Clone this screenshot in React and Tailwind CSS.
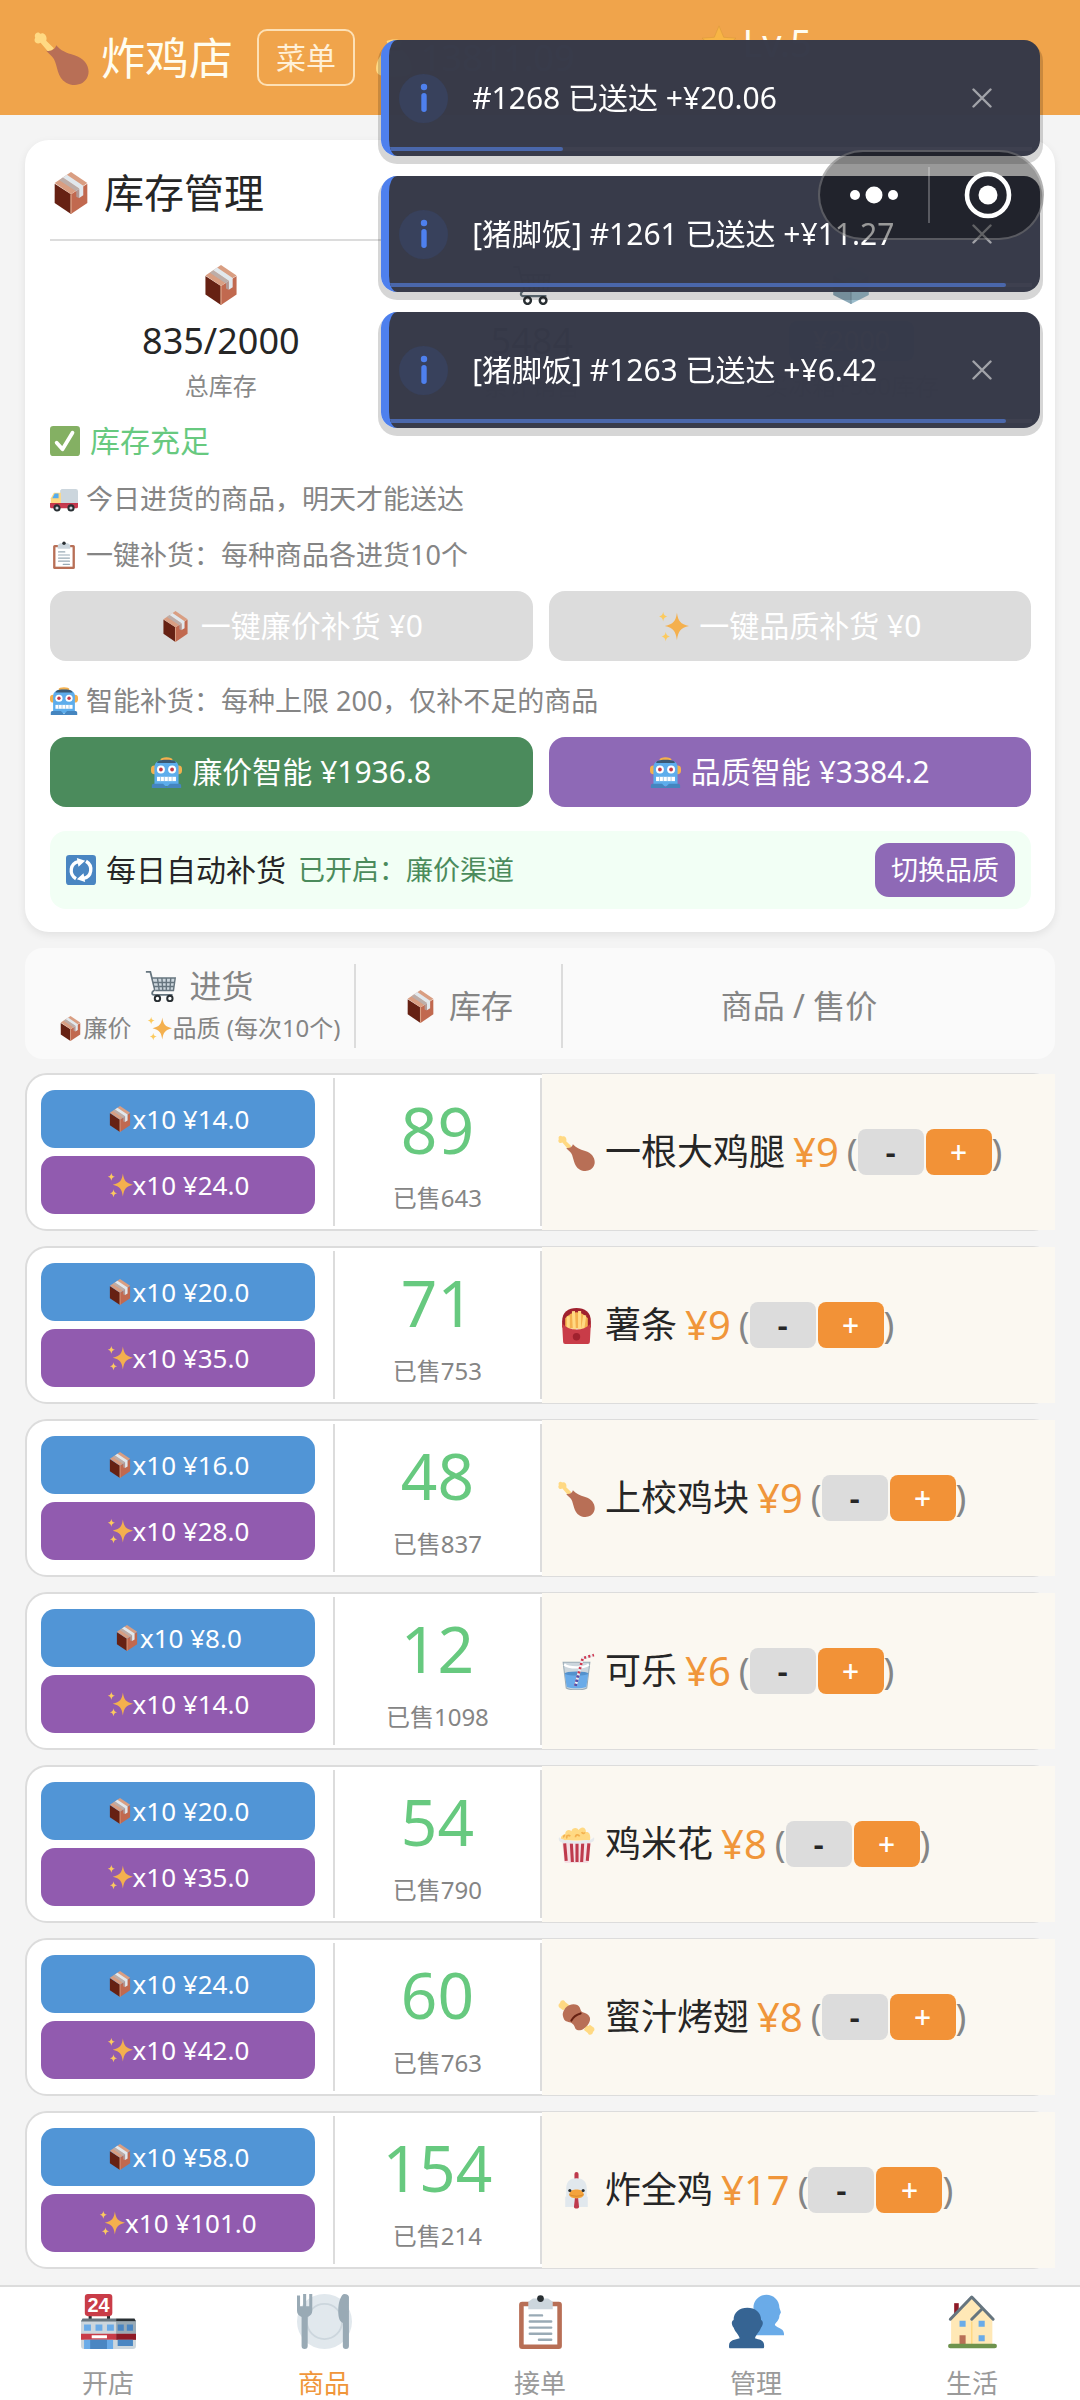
import { useState } from 'react';

// Small colour icons, all on a 36x36 grid
const drawings = {
  drumstick: (
    <>
      <path fill="#ffd983" d="M13 12 8 7c1-3-1.500-6-4-4.500C3 .5-.5 2 .8 5-.8 7.500 2 9.800 4.300 8.300L10 15z" />
      <path fill="#b86f56" d="M8 13.500c3 .8 6-1 6.500-3.500 3 3.500 6.500 5 12 6.500 7 2 10.500 8 8.800 13.500-2 6-9 7.500-14.300 4.500-6-3.500-5.500-11-8-15.500-1.200-2.300-3.500-3.500-5-5.500z" />
    </>
  ),
  box: (
    <>
      <path fill="#662113" d="M4 10v16.500L18 36V19z" />
      <path fill="#c1694f" d="M18 36V19l14-9v16.500z" />
      <path fill="#d99e82" d="M18 0 4 9.500 18 19l14-9.500z" />
      <path fill="#e1e8ed" d="m11 4.700 14 9.500v8l3.500-2.200v-8.200L14.500 2.300z" />
      <path fill="#aab8c2" d="m8 7 14.500 9.600v4.600l2.500 1.200v-8.200L11 4.700z" opacity=".6" />
      <path fill="#d99e82" d="M17.400 19h1.200v16.600l-.6.400-.6-.4z" />
    </>
  ),
  cart: (
    <>
      <path fill="none" stroke="#66757f" strokeWidth="2" d="M1 2h5l5 20c.3 1-3 1.500-3 4 0 1 1 2 2 2h21" />
      <path fill="#ccd6dd" d="M9 9h25l-2 14H12z" />
      <path fill="none" stroke="#66757f" strokeWidth="1.600" d="M8 9h26l-2 14H11.500M9 14h24M10 18.500h22.500M14 9l2 14M19 9l1 14M24 9v14M29 9l-1 14" />
      <circle cx="14" cy="32" r="3" fill="#fff" stroke="#292f33" strokeWidth="2.200" />
      <circle cx="28" cy="32" r="3" fill="#fff" stroke="#292f33" strokeWidth="2.200" />
    </>
  ),
  ice: (
    <>
      <path fill="#bdddf4" d="M18 1 2 9l16 9 16-9z" />
      <path fill="#8ca9b8" d="M2 9v18l16 8V18z" />
      <path fill="#9bbdcc" d="M34 9v18l-16 8V18z" />
      <path fill="#7996a5" d="M17.500 18h1v17h-1z" />
    </>
  ),
  check: (
    <>
      <rect width="36" height="36" rx="4" fill="#84b063" />
      <path fill="none" stroke="#fff" strokeWidth="4.500" strokeLinecap="round" strokeLinejoin="round" d="m8 20 7 8L27 8" />
    </>
  ),
  truck: (
    <>
      <path fill="#ccd6dd" d="M15 5h18a3 3 0 0 1 3 3v17H13V7z" />
      <path fill="#ffd983" d="M5 10h9v14H1v-7z" />
      <path fill="#55acee" d="M6 11h5v6H3z" />
      <path fill="#be1931" d="M0 23h36v5a2 2 0 0 1-2 2H2a2 2 0 0 1-2-2z" opacity=".85" />
      <circle cx="9" cy="29.500" r="3.300" fill="#ccd6dd" stroke="#292f33" strokeWidth="2.600" />
      <circle cx="27" cy="29.500" r="3.300" fill="#ccd6dd" stroke="#292f33" strokeWidth="2.600" />
    </>
  ),
  clipboard: (
    <>
      <rect x="4" y="5" width="28" height="31" rx="2" fill="#b86f56" />
      <path fill="#fff" d="M7 8h22v25H7z" />
      <path fill="#ccd6dd" d="M13 3h10l3 2v5H10V5z" />
      <circle cx="18" cy="3" r="2.200" fill="#292f33" />
      <path stroke="#99aab5" strokeWidth="1.600" strokeLinecap="round" d="M11 14h8M11 18h14M11 22h14M11 26h14M17 30h8" />
    </>
  ),
  sparkles: (
    <>
      <path fill="#f4b04e" d="M22 2c1.500 10 4 13 14 15.500-10 2.500-12.500 6-14 16.500-1.500-10.500-4-14-14-16.500C18 15 20.500 12 22 2z" />
      <path fill="#fcca5e" d="M6 1c.8 4 1.500 4.500 5 5.500-3.500 1-4.200 2-5 5.500-.8-3.500-1.500-4.500-5-5.500C4.500 5.500 5.200 5 6 1zM9 24c.8 4 1.500 4.500 5 5.500-3.500 1-4.200 2-5 5.500-.8-3.500-1.500-4.500-5-5.500 3.500-1 4.200-1.500 5-5.500z" />
    </>
  ),
  robot: (
    <>
      <ellipse cx="18" cy="3" rx="7" ry="2.800" fill="#f4b04e" />
      <rect x="0" y="10" width="36" height="10" rx="4" fill="#f4b04e" />
      <path fill="#5dadec" d="M4 12C4 6 8 3.500 18 3.500S32 6 32 12v22H4z" />
      <path fill="#3a5a75" d="M8 5c3-2.500 17-2.500 20 0l1 2H7z" />
      <circle cx="11.500" cy="14.500" r="4.600" fill="#fff" />
      <circle cx="24.500" cy="14.500" r="4.600" fill="#fff" />
      <circle cx="11.500" cy="14.500" r="2.200" fill="#c33a4a" />
      <circle cx="24.500" cy="14.500" r="2.200" fill="#c33a4a" />
      <path fill="#fff" d="M7 23h22v5H7z" />
      <path stroke="#9cc4e4" strokeWidth="1" d="M11 23v5M15.500 23v5M20 23v5M24.500 23v5" />
      <path fill="#4585bf" d="M1 33c0-2 2-2 3-2h10l4 4 4-4h10c1 0 3 0 3 2v3H1z" />
    </>
  ),
  refresh: (
    <>
      <rect width="36" height="36" rx="4" fill="#4a86c2" />
      <path fill="none" stroke="#fff" strokeWidth="4" d="M12 28.500C3 23 5 10 15 8M24 7.500C33 13 31 26 21 28" />
      <path fill="#fff" d="M13 3.500 23 7l-8 7zM23 32.500 13 29l8-7z" />
    </>
  ),
  fries: (
    <>
      <path fill="#a0212e" d="M4 14C4 5 10 1 18 1s14 4 14 13v6H4z" />
      <path fill="#f4b04e" d="M7 11c7-8 15-8 22 0v10H7z" />
      <path stroke="#ffd983" strokeWidth="3" d="M10 9v14M15 4l1 20M21 4v18M26 8l-2 14" />
      <path fill="#c93c48" d="M4 16c8 8 20 8 28 0l-1 18a2 2 0 0 1-2 2H7a2 2 0 0 1-2-2z" />
      <circle cx="18" cy="29" r="3.600" fill="#a0212e" />
    </>
  ),
  cola: (
    <>
      <path fill="#ccd6dd" stroke="#99aab5" strokeWidth="1" d="M5 9h26l-3 25c-4 2.500-16 2.500-20 0z" />
      <path fill="#6aabe8" d="M6.500 20h23L27.500 33c-4 1.800-15 1.800-19 0z" />
      <ellipse cx="18" cy="20" rx="11.500" ry="2" fill="#5391cc" />
      <path fill="none" stroke="#fff" strokeWidth="2.400" d="M6 11c4 4 20 4 24 0" />
      <path fill="none" stroke="#e8edf1" strokeWidth="2.600" d="M17 32 24 5l11-3" />
      <path fill="none" stroke="#d0374d" strokeWidth="2.600" strokeDasharray="2 2.200" d="M17 32 24 5l11-3" />
      <path fill="none" stroke="#4b52b0" strokeWidth="2.600" strokeDasharray="2 2.200" d="m17 32 3-12" />
    </>
  ),
  popcorn: (
    <>
      <path fill="#ffd983" d="M3 14c-1-4 2-6 4-6 0-4 4-5 6-3 1-4 6-4 7-1 3-5 8-2 7 2 4-1 5 4 4 8z" />
      <path fill="none" stroke="#f4b04e" strokeWidth="1.600" d="M9 12c-2-2 1-4 3-2M17 11c0-3 3-3 4-1M23 6c1 2 3 1 3 0M6 11c-1-1 0-2 1-2" />
      <path fill="#f5dfe4" d="M4 15h28l-2 19c0 1-1 2-2 2H8c-1 0-2-1-2-2z" />
      <path stroke="#be3a4c" strokeWidth="3" d="m6.500 17 1.500 17M13 17l1 18M18.500 17v18M24 17l-1 18M30 17l-1.500 17" />
      <path fill="#e6eaed" d="M1 11c2 2 4 1.500 6 3 4-1 7 1 11 1s8-2 12-1c2-1 3-1 5-3 1 3-1 5-3 5-9 1.500-19 1.500-28 0-2 0-4-2-3-5z" />
    </>
  ),
  wing: (
    <>
      <path stroke="#ffd983" strokeWidth="4" d="M4 4 32 32" />
      <path fill="#ffd983" d="M1 8a3 3 0 0 1 1-4c0-3 4-4 5-1l4 3-6 5zM35 28a3 3 0 0 1-1 4c0 3-4 4-5 1l-4-3 6-5z" />
      <path fill="#b86f56" d="M5 13c1-4 5-8 10-8 3 0 5 1 6 3s1 4 3 5c3 1 6 2 7 5 1 4-2 8-6 11-3 2-6 2-8 0-1-2-1-4-3-5-2-2-6-1-8-4-1-2-2-5-1-7z" />
      <path fill="none" stroke="#662113" strokeWidth="2" strokeLinecap="round" d="M13 21c2-4 5-6 9-7" />
    </>
  ),
  chicken: (
    <>
      <path fill="#be3a4c" d="M16 2a2 2 0 0 1 4 0v8h-4z" />
      <path fill="#e1e8ed" d="M8 16C8 9 12 6 18 6s10 3 10 10v18l-3-2-3 2-4-2-4 2-3-2-3 2z" />
      <path fill="#e1e8ed" d="M7 24h22v10H7z" />
      <path fill="#be3a4c" d="M16.500 25h3l1 9c-.5 2-4.500 2-5 0z" />
      <path fill="#f4a33c" d="M11 22c0-4 4-5 7-5s7 1 7 5c0 5-14 5-14 0z" />
      <path fill="none" stroke="#d98a2b" strokeWidth="1" d="M11 22c4 2 10 2 14 0" />
      <circle cx="11.500" cy="18" r="1.500" fill="#292f33" />
      <circle cx="24.500" cy="18" r="1.500" fill="#292f33" />
    </>
  ),
  store: (
    <>
      <path stroke="#292f33" strokeWidth="2" d="M6 12v5M18 12v5" />
      <rect x="2.500" y="0" width="18" height="14.500" rx="2" fill="#c93c48" />
      <text x="11.500" y="12" textAnchor="middle" fontSize="13" fontWeight="700" fill="#fff" fontFamily="Liberation Sans, sans-serif">24</text>
      <path fill="#ccd6dd" d="M0 17h36v17a2 2 0 0 1-2 2H2a2 2 0 0 1-2-2z" />
      <path fill="#66757f" d="M1 16h22v2H0z" />
      <path fill="#292f33" d="M23 16h12l1 2H23z" />
      <path fill="#99aab5" d="M23 18h13v8H23z" />
      <path fill="#6aabe8" d="M2 20h4.500v4H2zM9.500 20H14v4H9.500zM17 20h4.500v4H17z" />
      <path fill="#4a86c2" d="M24 20h4v4h-4zM30 20h4v4h-4z" />
      <path fill="#c93c48" d="M0 26h23v4H0z" />
      <path fill="#8f1a26" d="M23 26h13v4H23z" />
      <path fill="#fff" d="M7 27h10v2H7z" />
      <path fill="#6aabe8" d="M2 30h19v6H2z" />
      <path fill="#4a86c2" d="M6 30h11v6H6zM24 30h10v4H24z" />
    </>
  ),
  plate: (
    <>
      <circle cx="18" cy="18" r="18" fill="#e1e8ed" />
      <circle cx="18" cy="18" r="11.500" fill="#e1e8ed" stroke="#ccd6dd" strokeWidth="1.200" />
      <path fill="#99aab5" d="M0 1h2v7h2V0h2v8h2V0h2v11c0 2-1 3-3 4v19a2 2 0 0 1-4 0V15c-2-1-3-2-3-4zM34 2v32a2 2 0 0 1-4 0V19c-2-1-3-3-3-8 0-6 2-11 4-11 2 0 3 1 3 2z" />
    </>
  ),
  people: (
    <>
      <path fill="#6aabe8" d="M16 9c0-5 4-8.500 8.500-8.500S33 4 33 9l1 3-1 2c0 3-2 4-3 6 0 2 6 2 6 6v1H17z" />
      <path fill="#366493" d="M3 17c0-5 4-8 9-8s9 3 9 8c2 1 1 4 0 5-1 3-3 4-4 7 3 1 6 1 6 5 0 1 0 1.500-1 1.500H1C0 35.500 0 35 0 34c0-4 4-4 7-5-1-3-3-4-4-7-1-1-2-4 0-5z" />
    </>
  ),
  house: (
    <>
      <path fill="#8f1a26" d="M6 6h3v8H6z" />
      <path fill="#ffe8b6" d="M4 16 17.500 3 31 16v17H4z" />
      <path fill="#ffd983" d="M17 18h1v15h-1z" />
      <path fill="none" stroke="#66757f" strokeWidth="2" strokeLinecap="round" strokeLinejoin="round" d="M3.500 16.500 17.500 2l14 14.500M17.500 16.500l7-7" />
      <path fill="#6aabe8" d="M9.500 17.500h4v4h-4zM22 17.500h4v4h-4zM22 27h4v4h-4z" />
      <path fill="#b86f56" d="M9.500 27h4v6h-4z" />
      <rect x="2" y="32.500" width="32" height="3" rx="1.500" fill="#6e934d" />
    </>
  ),
  money: (
    <>
      <path fill="#ffd983" d="M11 2c3-2 12-2 15 0l-3 7c8 4 12 12 12 19 0 6-4 8-17 8S1 34 1 28 5 13 13 9z" />
      <path fill="#bf9a50" d="M12 8h12v3H12z" />
    </>
  ),
  star: <path fill="#f8b545" stroke="#d99a3a" strokeWidth=".6" d="m18 1 5 12 13 1-10 8 3 13-11-7-11 7 3-13L0 14l13-1z" />,
};

function Icon({ name, className }) {
  return (
    <svg viewBox="0 0 36 36" aria-hidden="true" className={`shrink-0 ${className}`}>
      {drawings[name]}
    </svg>
  );
}

const products = [
  { icon: 'drumstick', name: '一根大鸡腿', price: 9, stock: 89, sold: 643, cheap: '14.0', quality: '24.0' },
  { icon: 'fries', name: '薯条', price: 9, stock: 71, sold: 753, cheap: '20.0', quality: '35.0' },
  { icon: 'drumstick', name: '上校鸡块', price: 9, stock: 48, sold: 837, cheap: '16.0', quality: '28.0' },
  { icon: 'cola', name: '可乐', price: 6, stock: 12, sold: 1098, cheap: '8.0', quality: '14.0' },
  { icon: 'popcorn', name: '鸡米花', price: 8, stock: 54, sold: 790, cheap: '20.0', quality: '35.0' },
  { icon: 'wing', name: '蜜汁烤翅', price: 8, stock: 60, sold: 763, cheap: '24.0', quality: '42.0' },
  { icon: 'chicken', name: '炸全鸡', price: 17, stock: 154, sold: 214, cheap: '58.0', quality: '101.0' },
];

const tabs = [
  { icon: 'store', label: '开店' },
  { icon: 'plate', label: '商品' },
  { icon: 'clipboard', label: '接单' },
  { icon: 'people', label: '管理' },
  { icon: 'house', label: '生活' },
];

const initialToasts = [
  { id: 1268, text: '#1268 已送达 +¥20.06', progress: 27 },
  { id: 1261, text: '[猪脚饭] #1261 已送达 +¥11.27', progress: 96 },
  { id: 1263, text: '[猪脚饭] #1263 已送达 +¥6.42', progress: 96 },
];

function Header() {
  return (
    <header className="flex h-[115px] shrink-0 items-center bg-[#f0a44b] pl-[34px] pr-[268px] text-[#fffdf0]">
      <Icon name="drumstick" className="size-[55px]" />
      <h1 className="ml-3 text-[44px] leading-[56px]">炸鸡店</h1>
      <button className="ml-6 h-[57px] rounded-[10px] border-2 border-[#fde0b5] px-[17px] text-[30px] leading-[40px] text-[#fff0d8]">
        菜单
      </button>
      <div className="ml-5 flex items-center gap-2 text-[36px] leading-[40px]">
        <Icon name="money" className="size-[38px]" />
        13811.09
      </div>
      <div className="ml-auto flex items-center gap-[6px] self-start pt-[22px] text-[38px] leading-[40px]">
        <Icon name="star" className="size-[34px]" />
        Lv.5
      </div>
    </header>
  );
}

function StockCard() {
  const [channel, setChannel] = useState('cheap');

  return (
    <section className="rounded-[24px] bg-white pb-[23px] pl-[25px] pr-6 pt-[25px] shadow-[0_3px_8px_rgba(0,0,0,0.08)]">
      <h2 className="flex items-center gap-3 border-b-2 border-[#dcdcdc] pb-[18px] text-[40px] leading-[56px] text-[#262626]">
        <Icon name="box" className="size-[42px]" />
        库存管理
      </h2>

      {/* Totals */}
      <div className="mt-6 flex justify-around text-center">
        <div>
          <Icon name="box" className="mx-auto size-[40px]" />
          <p className="mt-4 text-[36px] leading-[40px] text-[#262626]">835/2000</p>
          <p className="mt-2 text-[24px] leading-[34px] text-[#888]">总库存</p>
        </div>
        <div>
          <Icon name="cart" className="mx-auto size-[40px]" />
          <p className="mt-4 text-[36px] leading-[40px] text-[#262626]">5484</p>
          <p className="mt-2 text-[24px] leading-[34px] text-[#888]">累计销售</p>
        </div>
        <div>
          <Icon name="ice" className="mx-auto size-[40px]" />
          <button className="mt-4 h-[40px] rounded-lg bg-[#5195d6] px-6 text-[27px] leading-[40px] text-white">¥2000</button>
          <p className="mt-2 text-[24px] leading-[34px] text-[#888]">买冰箱+500库存</p>
        </div>
      </div>

      <p className="mt-[18px] flex items-center gap-[10px] text-[30px] leading-[40px] text-[#67c97f]">
        <Icon name="check" className="size-[30px]" />
        库存充足
      </p>
      <p className="mt-[18px] flex items-center gap-2 text-[27px] leading-[40px] text-[#858585]">
        <Icon name="truck" className="size-[28px]" />
        今日进货的商品，明天才能送达
      </p>
      <p className="mt-4 flex items-center gap-2 text-[27px] leading-[40px] text-[#858585]">
        <Icon name="clipboard" className="size-[28px]" />
        一键补货：每种商品各进货10个
      </p>
      <div className="mt-4 grid grid-cols-2 gap-4 text-[30px] leading-[40px] text-white">
        <button disabled className="flex h-[70px] items-center justify-center gap-[10px] rounded-[16px] bg-[#dcdcdc]">
          <Icon name="box" className="size-[31px]" />
          一键廉价补货 ¥0
        </button>
        <button disabled className="flex h-[70px] items-center justify-center gap-[10px] rounded-[16px] bg-[#dcdcdc]">
          <Icon name="sparkles" className="size-[31px]" />
          一键品质补货 ¥0
        </button>
      </div>

      <p className="mt-5 flex items-center gap-2 text-[27px] leading-[40px] text-[#858585]">
        <Icon name="robot" className="size-[28px]" />
        智能补货：每种上限 200，仅补不足的商品
      </p>
      <div className="mt-4 grid grid-cols-2 gap-4 text-[30px] leading-[40px] text-white">
        <button className="flex h-[70px] items-center justify-center gap-[10px] rounded-[16px] bg-[#4b8b5c]">
          <Icon name="robot" className="size-[31px]" />
          廉价智能 ¥1936.8
        </button>
        <button className="flex h-[70px] items-center justify-center gap-[10px] rounded-[16px] bg-[#8e69b6]">
          <Icon name="robot" className="size-[31px]" />
          品质智能 ¥3384.2
        </button>
      </div>

      {/* Daily auto restock */}
      <div className="mt-6 flex h-[78px] items-center rounded-[16px] bg-[#f2fff5] px-4">
        <Icon name="refresh" className="size-[30px]" />
        <span className="ml-[10px] text-[30px] leading-[40px] text-[#262626]">每日自动补货</span>
        <span className="ml-3 text-[27px] leading-[40px] text-[#4b8b5c]">
          已开启：{channel === 'cheap' ? '廉价渠道' : '品质渠道'}
        </span>
        <button
          onClick={() => setChannel(channel === 'cheap' ? 'quality' : 'cheap')}
          className="ml-auto h-[54px] rounded-[14px] bg-[#8e69b6] px-4 text-[27px] leading-[40px] text-white"
        >
          {channel === 'cheap' ? '切换品质' : '切换廉价'}
        </button>
      </div>
    </section>
  );
}

function ListHeader() {
  return (
    <div className="mt-4 grid h-[111px] grid-cols-[331fr_207fr_492fr] rounded-[18px] bg-[#fafafa] pb-[18px] pt-4 text-[32px] leading-[44px] text-[#858585]">
      <div className="flex flex-col items-center justify-center border-r-2 border-[#dcdcdc] pl-5">
        <span className="flex items-center gap-3">
          <Icon name="cart" className="size-[32px]" />
          进货
        </span>
        <span className="flex items-center whitespace-nowrap text-[24px] leading-[40px]">
          <Icon name="box" className="size-[25px]" />
          廉价
          <Icon name="sparkles" className="ml-4 size-[25px]" />
          品质 (每次10个)
        </span>
      </div>
      <div className="flex items-center justify-center gap-3 border-r-2 border-[#dcdcdc]">
        <Icon name="box" className="size-[33px]" />
        库存
      </div>
      <div className="flex items-center justify-center pr-5">商品 / 售价</div>
    </div>
  );
}

function ProductRow({ product, onPriceChange }) {
  return (
    <li className="grid h-[158px] grid-cols-[309fr_208fr_513fr] rounded-[22px] border-2 border-[#dcdcdc] bg-white">
      <div className="my-[3px] flex flex-col justify-center gap-2 border-r-2 border-[#dcdcdc] pl-[14px] pr-[18px] text-[26px] leading-[36px] text-white">
        <button className="flex h-[58px] items-center justify-center rounded-[14px] bg-[#5195d6]">
          <Icon name="box" className="size-[26px]" />
          x10 ¥{product.cheap}
        </button>
        <button className="flex h-[58px] items-center justify-center rounded-[14px] bg-[#915baf]">
          <Icon name="sparkles" className="size-[26px]" />
          x10 ¥{product.quality}
        </button>
      </div>
      <div className="my-[3px] flex flex-col items-center justify-center border-r-2 border-[#dcdcdc] pt-1">
        <strong className="text-[64px] font-normal leading-[80px] text-[#67c97f]">{product.stock}</strong>
        <span className="mt-2 text-[24px] leading-[40px] text-[#858585]">已售{product.sold}</span>
      </div>
      <div className="-my-px -mr-[2px] flex items-center bg-[#fbf8f1] pl-4 text-[36px] leading-[48px] text-[#262626]">
        <Icon name={product.icon} className="size-[37px]" />
        <span className="ml-[10px]">{product.name}</span>
        <span className="ml-2 text-[40px] text-[#f0963a]">¥{product.price}</span>
        <span className="ml-2 text-[#858585]">(</span>
        <button
          aria-label={`${product.name} 降价`}
          onClick={() => onPriceChange(-1)}
          className="h-[46px] w-[66px] rounded-[8px] bg-[#dcdcdc] text-[32px] font-semibold leading-[40px]"
        >
          -
        </button>
        <button
          aria-label={`${product.name} 涨价`}
          onClick={() => onPriceChange(1)}
          className="ml-[2px] h-[46px] w-[66px] rounded-[8px] bg-[#f29237] text-[30px] font-medium leading-[40px] text-white"
        >
          +
        </button>
        <span className="text-[#858585]">)</span>
      </div>
    </li>
  );
}

function Toast({ toast, onClose }) {
  return (
    <div className="relative flex h-[116px] items-center overflow-hidden rounded-[16px] border-l-8 border-[#4e80ee] bg-[#363948]/99 pl-[10px] pr-[42px]">
      <span className="flex size-[49px] shrink-0 items-center justify-center rounded-full bg-[#38415c]">
        <svg viewBox="0 0 8 30" className="h-[30px] w-2 fill-[#4e80ee]" aria-hidden="true">
          <circle cx="4" cy="4" r="3.200" />
          <rect x="1.300" y="10" width="5.400" height="19" rx="2.700" />
        </svg>
      </span>
      <p className="ml-6 text-[30px] leading-[40px] text-white">{toast.text}</p>
      <button aria-label="关闭" onClick={onClose} className="ml-auto flex size-[32px] items-center justify-center">
        <svg viewBox="0 0 20 20" className="size-[20px] stroke-[#a2a3a9]" fill="none" strokeWidth="2.400" strokeLinecap="round" aria-hidden="true">
          <path d="m1.500 1.500 17 17M18.500 1.500l-17 17" />
        </svg>
      </button>
      <div className="absolute bottom-[5px] left-0 right-2 h-[4px] bg-[#3e404f]">
        <div className="h-full rounded-r-full bg-[#4a67ab]" style={{ width: `${toast.progress}%` }} />
      </div>
    </div>
  );
}

function Capsule() {
  return (
    <div className="fixed right-[36px] top-[150px] flex h-[90px] w-[226px] items-center rounded-full border-2 border-white/25 bg-black/40">
      <button aria-label="更多" className="flex h-full flex-1 items-center justify-center">
        <svg viewBox="0 0 50 20" className="h-5 w-[50px] fill-white" aria-hidden="true">
          <circle cx="6" cy="10" r="5" />
          <circle cx="25" cy="10" r="8.500" />
          <circle cx="44" cy="10" r="5" />
        </svg>
      </button>
      <span className="h-[56px] w-[2px] bg-white/25" />
      <button aria-label="退出" className="flex h-full flex-1 items-center justify-center pl-1">
        <svg viewBox="0 0 48 48" className="size-12" aria-hidden="true">
          <circle cx="24" cy="24" r="21" fill="none" stroke="#fff" strokeWidth="4.600" />
          <circle cx="24" cy="24" r="9.500" fill="#fff" />
        </svg>
      </button>
    </div>
  );
}

function TabBar({ active, onSelect }) {
  return (
    <nav className="grid h-[115px] shrink-0 grid-cols-5 border-t-2 border-[#dcdcdc] bg-white">
      {tabs.map((tab) => (
        <button
          key={tab.label}
          onClick={() => onSelect(tab.label)}
          className={`flex flex-col items-center pt-[7px] text-[26px] leading-[36px] ${
            active === tab.label ? 'text-[#f0963a]' : 'text-[#9a9a9a]'
          }`}
        >
          <Icon name={tab.icon} className="size-[55px]" />
          <span className="mt-4">{tab.label}</span>
        </button>
      ))}
    </nav>
  );
}

export default function App() {
  const [items, setItems] = useState(products);
  const [toasts, setToasts] = useState(initialToasts);
  const [activeTab, setActiveTab] = useState('商品');

  const changePrice = (name, delta) => {
    setItems((prev) =>
      prev.map((item) => (item.name === name ? { ...item, price: Math.max(1, item.price + delta) } : item))
    );
  };

  return (
    <div className="flex h-screen flex-col bg-[#f4f4f4] font-['Noto_Sans','Noto_Sans_CJK_SC',sans-serif]">
      <Header />
      <main className="min-h-0 flex-1 overflow-y-auto px-[25px] pt-[25px] [scrollbar-width:none]">
        <StockCard />
        <ListHeader />
        <ul className="mt-[14px] flex flex-col gap-[15px]">
          {items.map((item) => (
            <ProductRow key={item.name} product={item} onPriceChange={(delta) => changePrice(item.name, delta)} />
          ))}
        </ul>
      </main>
      <TabBar active={activeTab} onSelect={setActiveTab} />

      {/* Delivery notices */}
      <div className="fixed right-[40px] top-[40px] flex w-[61%] flex-col gap-5">
        {toasts.map((toast) => (
          <div key={toast.id} className="rounded-[16px] shadow-[0_5px_0_3px_rgba(0,0,0,0.16)]">
            <Toast toast={toast} onClose={() => setToasts((prev) => prev.filter((t) => t.id !== toast.id))} />
          </div>
        ))}
      </div>
      <Capsule />
    </div>
  );
}
